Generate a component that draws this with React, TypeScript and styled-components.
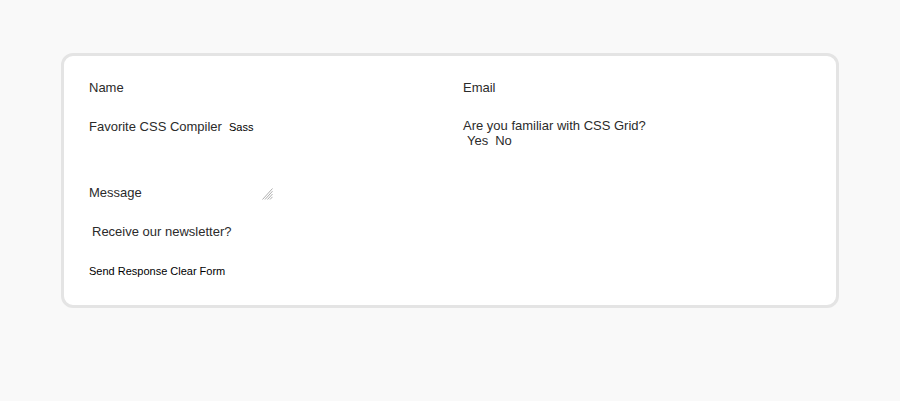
import React from "react";
import styled, { createGlobalStyle } from "styled-components";

const Global = createGlobalStyle`
  html, body { margin: 0; padding: 0; background: #f9f9f9; }
  body { font-family: "Liberation Sans", Arial, sans-serif; }
`;

const Card = styled.form`
  box-sizing: border-box;
  width: 778px;
  margin: 53px auto 0;
  background: #ffffff;
  border: 3px solid #e4e4e4;
  border-radius: 12px;
  padding: 24px 25px 26px;
  display: grid;
  grid-template-columns: 1fr 1fr;
  column-gap: 26px;
  row-gap: 23px;
  color: #2b2b2b;
  font-size: 13px;
  line-height: 16px;
`;

const Field = styled.div<{ $full?: boolean; $bottom?: boolean }>`
  grid-column: ${(p) => (p.$full ? "1 / -1" : "auto")};
  display: flex;
  align-items: ${(p) => (p.$bottom ? "flex-end" : "flex-start")};
  flex-wrap: wrap;
`;

const Label = styled.label<{ $tight?: boolean }>`
  display: inline-block;
  font-size: 13px;
  line-height: ${(p) => (p.$tight ? "14px" : "16px")};
`;

const Blank = styled.input`
  appearance: none;
  border: none;
  background: transparent;
  outline: none;
  width: 160px;
  height: 16px;
  padding: 0;
  margin: 0;
`;

const Picker = styled.select`
  appearance: none;
  border: none;
  background: transparent;
  font-family: inherit;
  font-size: 11px;
  line-height: 16px;
  height: 16px;
  color: #000;
  padding: 0;
  margin: 0 0 0 7px;
`;

const Block = styled.div`
  display: flex;
  flex-direction: column;
`;

const Choices = styled.div`
  display: flex;
  gap: 7px;
  padding-left: 4px;
  line-height: 15px;
`;

const Choice = styled.label`
  display: inline-flex;
  align-items: center;
`;

const Hidden = styled.input`
  appearance: none;
  width: 0;
  height: 0;
  margin: 0;
  border: none;
`;

const MessageBox = styled.div`
  position: relative;
  width: 127px;
  height: 30px;
  margin-left: 4px;
`;

const Message = styled.textarea`
  display: block;
  box-sizing: border-box;
  border: none;
  background: transparent;
  outline: none;
  resize: none;
  width: 100%;
  height: 100%;
  margin: 0;
  padding: 0;
  font-family: inherit;
  font-size: 13px;
`;

const Grip = styled.svg`
  position: absolute;
  right: 0;
  bottom: 1px;
  width: 11px;
  height: 12px;
  pointer-events: none;
`;

const Check = styled.label`
  display: inline-flex;
  align-items: center;
  padding-left: 3px;
`;

const Actions = styled.div`
  grid-column: 1 / -1;
  display: flex;
  gap: 3px;
`;

const Button = styled.button`
  border: none;
  background: transparent;
  padding: 0;
  font-family: inherit;
  font-size: 11px;
  line-height: 16px;
  color: #000;
  cursor: pointer;
`;

export default function App() {
  return (
    <>
      <Global />
      <Card onSubmit={(e) => e.preventDefault()}>
        <Field>
          <Label htmlFor="name">Name</Label>
          <Blank id="name" type="text" />
        </Field>
        <Field>
          <Label htmlFor="email">Email</Label>
          <Blank id="email" type="email" />
        </Field>
        <Field>
          <Label htmlFor="compiler">Favorite CSS Compiler</Label>
          <Picker id="compiler" defaultValue="Sass">
            <option>Sass</option>
            <option>Less</option>
            <option>Stylus</option>
          </Picker>
        </Field>
        <Block>
          <Label $tight>Are you familiar with CSS Grid?</Label>
          <Choices>
            <Choice>
              <Hidden type="radio" name="grid" />
              Yes
            </Choice>
            <Choice>
              <Hidden type="radio" name="grid" />
              No
            </Choice>
          </Choices>
        </Block>
        <Field $full $bottom>
          <Label htmlFor="msg">Message</Label>
          <MessageBox>
            <Message id="msg" />
            <Grip viewBox="0 0 11 12">
              <g stroke="#9a9a9a" strokeWidth="0.8">
                <line x1="0.5" y1="11.5" x2="10.5" y2="0.5" />
                <line x1="3" y1="11.5" x2="10.5" y2="3.2" />
                <line x1="5.5" y1="11.5" x2="10.5" y2="6" />
                <line x1="8" y1="11.5" x2="10.5" y2="8.8" />
              </g>
            </Grip>
          </MessageBox>
        </Field>
        <Field $full>
          <Check>
            <Hidden type="checkbox" />
            Receive our newsletter?
          </Check>
        </Field>
        <Actions>
          <Button type="submit">Send Response</Button>
          <Button type="reset">Clear Form</Button>
        </Actions>
      </Card>
    </>
  );
}
